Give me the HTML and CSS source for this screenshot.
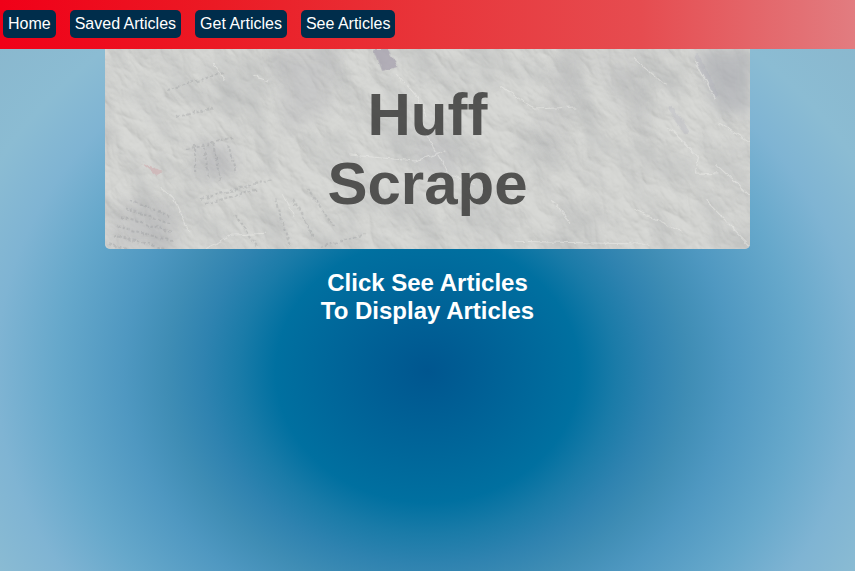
FILE: index.html
```html
<!DOCTYPE html>
<html lang="en">
<head>
<meta charset="utf-8">
<meta name="viewport" content="width=device-width, initial-scale=1">
<title>Huff Scrape</title>
<link rel="stylesheet" href="styles.css">
</head>
<body>
<nav class="navbar">
  <a class="nav-link" href="#home">Home</a>
  <a class="nav-link" href="#saved">Saved Articles</a>
  <a class="nav-link" href="#get">Get Articles</a>
  <a class="nav-link" href="#see">See Articles</a>
</nav>
<main>
  <header class="banner">
    <svg class="paper" viewBox="0 0 645 200" preserveAspectRatio="xMidYMid slice" aria-hidden="true">
      <defs>
        <filter id="crumple" x="0" y="0" width="100%" height="100%" color-interpolation-filters="sRGB">
          <feTurbulence type="turbulence" baseFrequency="0.025 0.04" numOctaves="5" seed="8"/>
          <feDiffuseLighting surfaceScale="2" lighting-color="#e6e6e3">
            <feDistantLight azimuth="240" elevation="68"/>
          </feDiffuseLighting>
        </filter>
        <filter id="stain" x="0" y="0" width="100%" height="100%" color-interpolation-filters="sRGB">
          <feTurbulence type="fractalNoise" baseFrequency="0.016 0.03" numOctaves="5" seed="21"/>
          <feColorMatrix values="0 0 0 0 0.62  0 0 0 0 0.63  0 0 0 0 0.64  2 0 0 0 -0.86"/>
        </filter>
        <filter id="rough" x="-20%" y="-20%" width="140%" height="140%">
          <feTurbulence type="fractalNoise" baseFrequency="0.12" numOctaves="3" seed="4" result="n"/>
          <feDisplacementMap in="SourceGraphic" in2="n" scale="5" xChannelSelector="R" yChannelSelector="G"/>
          <feGaussianBlur stdDeviation="0.6"/>
        </filter>
        <filter id="soft" x="-30%" y="-30%" width="160%" height="160%">
          <feGaussianBlur stdDeviation="7"/>
        </filter>
      </defs>
      <rect width="645" height="200" fill="#d3d4d2"/>
      <g transform="rotate(52 322 100)">
        <rect x="-30" y="-260" width="700" height="720" filter="url(#crumple)" opacity="0.28"/>
        <rect x="-30" y="-260" width="700" height="720" filter="url(#stain)" opacity="0.4"/>
      </g>
      <g filter="url(#soft)" fill="#a9aab0">
        <path d="M590 0H645V66L612 62Z" opacity=".6"/>
        <path d="M168 0H235L225 60L180 85Z" opacity=".3"/>
        <path d="M85 92L132 98L130 128L98 132Z" opacity=".35"/>
        <path d="M320 75L350 100L352 130L310 118Z" opacity=".35"/>
        <path d="M485 0H530L545 90L510 60Z" opacity=".15"/>
        <path d="M18 150L70 160L78 200H0Z" opacity=".3"/>
        <path d="M460 0H485L450 110L430 75Z" opacity=".2"/>
      </g>
      <g filter="url(#rough)">
        <path d="M269 0H282L292 18L277 22Z" fill="#a5a0ad" opacity=".75"/>
        <path d="M36 114L57 123L51 126Z" fill="#cda4a8" opacity=".5"/>
        <path d="M564 58L582 84M590 6L612 48" stroke="#a8a9b8" stroke-width="5" opacity=".25"/>
        <g fill="none" stroke="#85878a" stroke-width="2" stroke-dasharray="3 2" opacity=".25">
          <path d="M62 41L118 24M72 68L110 59M82 101L128 88M96 150L168 130M100 155L153 140"/>
          <path d="M25 151L65 167M20 159L65 175M16 168L68 183M12 177L67 192M8 186L60 200M4 195L30 204"/>
          <path d="M170 150L185 198M188 150L210 190M202 140L230 178M130 165L153 198M215 198L260 185"/>
          <path d="M90 95V125M98 94L104 129M108 94L115 132M123 96L130 122"/>
        </g>
        <g fill="none" stroke="#eeeeeb" stroke-width="1" opacity=".55">
          <path d="M53 137L70 150L84 183M108 14L119 31M148 27L163 32M100 200L125 186L160 184"/>
          <path d="M245 106L310 112L340 102M178 145L190 168M292 25L312 48L322 67M318 80L344 126L370 136"/>
          <path d="M396 38L430 60L470 58M528 8L561 37M590 12L610 50M563 78L593 108L590 124L613 125"/>
          <path d="M614 74L645 94M610 115L645 147M447 150L465 174M528 160L577 182M600 151L645 197M410 192L543 195"/>
        </g>
      </g>
    </svg>
    <h1 class="title">Huff<br>Scrape</h1>
  </header>
  <h2 class="hint">Click See Articles<br>To Display Articles</h2>
</main>
</body>
</html>
```
FILE: styles.css
```css
* {
  box-sizing: border-box;
}

body {
  margin: 0;
  min-height: 100vh;
  font-family: "Liberation Sans", Arial, sans-serif;
  background: radial-gradient(
    ellipse 71% 92% at 50% 65%,
    #00568f 0%,
    #0070a0 25%,
    #1a7ba8 31%,
    #2f83b0 37%,
    #3f8db5 43%,
    #4f98c1 50%,
    #66a8cb 61%,
    #7fb4d3 71%,
    #8bbcd3 81%,
    #89b6cc 100%
  ) no-repeat;
}

.navbar {
  display: flex;
  flex-wrap: wrap;
  gap: 14px;
  padding: 10px 3px 11px;
  background: linear-gradient(to right, #f00018, #eb1a24 25%, #e8353a 50%, #e64c50 75%, #e27c80);
}

.nav-link {
  padding: 5px;
  border-radius: 5px;
  background: #002d4b;
  color: #fff;
  font-size: 16px;
  line-height: 18px;
  text-decoration: none;
}

.banner {
  position: relative;
  width: 75.5%;
  margin: 0 auto;
  padding: 31px;
  border-radius: 0 0 5px 5px;
  overflow: hidden;
  text-align: center;
}

.paper {
  position: absolute;
  inset: 0;
  width: 100%;
  height: 100%;
}

.title {
  position: relative;
  margin: 0;
  color: #3a3a39;
  opacity: 0.84;
  font-size: 60px;
  line-height: 69px;
}

.hint {
  margin: 20px 0;
  color: #fff;
  font-size: 24px;
  line-height: 28px;
  text-align: center;
}
```
